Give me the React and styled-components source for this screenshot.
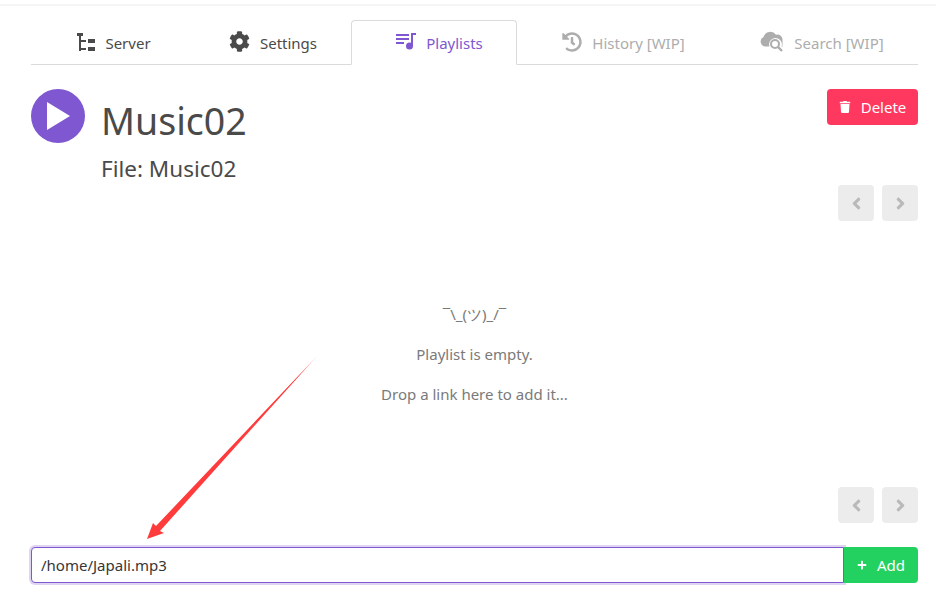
import styled, { createGlobalStyle } from "styled-components";
import { FaCog, FaHistory, FaTrash, FaPlus, FaAngleLeft, FaAngleRight } from "react-icons/fa";

const Global = createGlobalStyle`
    html, body {
        margin: 0;
        padding: 0;
        background: #fff;
    }
    body {
        font-family: "Noto Sans", "Open Sans", sans-serif;
        color: #4a4a4a;
        font-size: 16px;
    }
`

const TopLine = styled.div`
    height: 2px;
    margin-top: 4px;
    background: #f5f5f5;
`

const Page = styled.div`
    position: relative;
    width: 936px;
    height: 603px;
    overflow: hidden;
    box-sizing: border-box;
`

const Content = styled.div`
    padding: 14px 18px 0 31px;
    display: flex;
    flex-direction: column;
`

const Tabs = styled.ul`
    display: flex;
    list-style: none;
    margin: 0;
    padding: 0;
    height: 45px;
    box-sizing: border-box;
    border-bottom: 1px solid #dbdbdb;
`

const Tab = styled.li`
    width: ${(p) => p.$w}px;
    height: 45px;
    box-sizing: border-box;
    display: flex;
    align-items: center;
    justify-content: center;
    gap: 10px;
    font-size: 15px;
    padding: 1px 0 0 ${(p) => p.$shift || 0}px;
    color: ${(p) => (p.$active ? "#7e57d1" : p.$off ? "#adadad" : "#4a4a4a")};
    border: 1px solid ${(p) => (p.$active ? "#dbdbdb" : "transparent")};
    border-bottom-color: ${(p) => (p.$active ? "#fff" : "transparent")};
    border-radius: 4px 4px 0 0;
    background: ${(p) => (p.$active ? "#fff" : "transparent")};

    svg {
        flex: none;
        margin-top: -3px;
    }
`

const Head = styled.div`
    display: flex;
    justify-content: space-between;
    align-items: flex-start;
    margin-top: 24px;
`

const HeadLeft = styled.div`
    display: flex;
    gap: 16px;
`

const PlayBtn = styled.div`
    width: 54px;
    height: 54px;
    border-radius: 50%;
    background: #7e57d1;
    display: flex;
    align-items: center;
    justify-content: center;
`

const Titles = styled.div`
    display: flex;
    flex-direction: column;
`

const Title = styled.h1`
    margin: 0;
    font-size: 37.5px;
    font-weight: 400;
    line-height: 54px;
    color: #4a4a4a;
    margin-top: 5px;
`

const Sub = styled.div`
    font-size: 22.5px;
    line-height: 30px;
    margin-top: 6px;
    color: #4a4a4a;
`

const DeleteBtn = styled.button`
    width: 91px;
    height: 36px;
    border: 0;
    border-radius: 4px;
    background: #ff3860;
    color: #fff;
    font: inherit;
    font-size: 15px;
    display: flex;
    align-items: center;
    justify-content: center;
    gap: 10px;
    padding: 0;
`

const Pager = styled.div`
    display: flex;
    justify-content: flex-end;
    gap: 8px;
    margin-top: ${(p) => p.$top}px;
`

const PageBtn = styled.div`
    width: 36px;
    height: 36px;
    border-radius: 4px;
    background: #ececec;
    color: #b9b9b9;
    display: flex;
    align-items: center;
    justify-content: center;
`

const Empty = styled.div`
    margin-top: 81px;
    height: 185px;
    display: flex;
    flex-direction: column;
    align-items: center;
    gap: 16px;
    color: #7a7a7a;
    font-size: 15px;
    line-height: 24px;
`

const AddRow = styled.div`
    display: flex;
    margin-top: 24px;
`

const PathInput = styled.input`
    flex: 1;
    min-width: 0;
    height: 36px;
    box-sizing: border-box;
    border: 1px solid #7e57d1;
    border-radius: 4px 0 0 4px;
    box-shadow: 0 0 0 2px rgba(126, 87, 209, 0.25);
    padding: 0 9px;
    font: inherit;
    font-size: 15px;
    color: #363636;
    outline: none;
`

const AddBtn = styled.button`
    width: 74px;
    height: 36px;
    border: 0;
    border-radius: 0 4px 4px 0;
    background: #23d160;
    color: #fff;
    font: inherit;
    font-size: 15px;
    display: flex;
    align-items: center;
    justify-content: center;
    gap: 10px;
    padding: 0;
`

const Arrow = styled.svg`
    position: absolute;
    left: 0;
    top: 0;
    pointer-events: none;
`

const TreeIcon = () => (
    <svg width="18" height="18" viewBox="0 0 18 18" fill="currentColor">
        <rect x="0" y="0" width="6" height="3" />
        <rect x="2" y="3" width="2" height="15" />
        <rect x="2" y="7" width="7" height="2" />
        <rect x="2" y="15" width="7" height="2" />
        <rect x="11" y="6" width="7" height="4" />
        <rect x="11" y="14" width="7" height="4" />
    </svg>
);

const PlaylistIcon = () => (
    <svg width="20" height="18" viewBox="0 0 20 18" fill="currentColor">
        <rect x="0" y="1" width="13" height="2" />
        <rect x="0" y="5" width="13" height="2" />
        <rect x="0" y="9" width="8" height="2" />
        <rect x="15" y="0" width="2" height="13" />
        <rect x="15" y="0" width="5" height="2" />
        <circle cx="13.5" cy="13" r="3.5" />
    </svg>
);

const CloudSearchIcon = () => (
    <svg width="24" height="22" viewBox="0 0 24 22" fill="currentColor">
        <path d="M5 15.5 A5 5 0 0 1 3.5 6 A7 7 0 0 1 16 3.8 A5 5 0 0 1 22.5 9 L22.5 15.5 Z" />
        <circle cx="15.5" cy="13.5" r="6.5" fill="#fff" />
        <circle cx="15" cy="13" r="4" fill="none" stroke="currentColor" strokeWidth="2" />
        <path d="M18 16 L22 20" stroke="currentColor" strokeWidth="2.4" />
    </svg>
);

function App() {
    return (
        <Page>
            <Global />
            <TopLine />
            <Content>
                <Tabs>
                    <Tab $w={164} $shift={2}><TreeIcon />Server</Tab>
                    <Tab $w={156}><FaCog size={21} />Settings</Tab>
                    <Tab $w={166} $active $shift={11}><PlaylistIcon />Playlists</Tab>
                    <Tab $w={205} $off $shift={8}><FaHistory size={20} />History [WIP]</Tab>
                    <Tab $w={196} $off $shift={4}><CloudSearchIcon />Search [WIP]</Tab>
                </Tabs>
                <Head>
                    <HeadLeft>
                        <PlayBtn>
                            <svg width="24" height="28" viewBox="0 0 24 28">
                                <path d="M1 0 L24 14 L1 28 Z" fill="#fff" />
                            </svg>
                        </PlayBtn>
                        <Titles>
                            <Title>Music02</Title>
                            <Sub>File: Music02</Sub>
                        </Titles>
                    </HeadLeft>
                    <DeleteBtn><FaTrash size={12} />Delete</DeleteBtn>
                </Head>
                <Pager $top={1}>
                    <PageBtn><FaAngleLeft size={19} /></PageBtn>
                    <PageBtn><FaAngleRight size={19} /></PageBtn>
                </Pager>
                <Empty>
                    <div>¯\_(ツ)_/¯</div>
                    <div>Playlist is empty.</div>
                    <div>Drop a link here to add it...</div>
                </Empty>
                <Pager $top={0}>
                    <PageBtn><FaAngleLeft size={19} /></PageBtn>
                    <PageBtn><FaAngleRight size={19} /></PageBtn>
                </Pager>
                <AddRow>
                    <PathInput defaultValue="/home/Japali.mp3" />
                    <AddBtn><FaPlus size={10} />Add</AddBtn>
                </AddRow>
            </Content>
            <Arrow width="936" height="603" viewBox="0 0 936 603">
                <defs>
                    <linearGradient id="fade" x1="318" y1="355" x2="147" y2="539" gradientUnits="userSpaceOnUse">
                        <stop offset="0" stopColor="#ff3b3b" stopOpacity="0.3" />
                        <stop offset="0.12" stopColor="#ff3b3b" />
                        <stop offset="1" stopColor="#ff3b3b" />
                    </linearGradient>
                </defs>
                <path d="M318 355 L160 531 L164 533 L147 539 L153 523 L156 526 Z" fill="url(#fade)" />
            </Arrow>
        </Page>
    );
}

export default App;
